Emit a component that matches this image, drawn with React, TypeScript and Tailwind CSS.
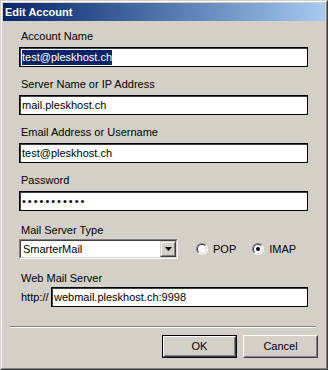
import React from "react";

const font = { fontFamily: '"Liberation Sans", Arial, sans-serif' };

function Field({ children, width = "w-[289px]" }: { children: React.ReactNode; width?: string }) {
  return (
    <div
      className={`${width} h-[20px] bg-white border border-black shadow-[inset_1px_1px_0_#404040] flex items-center pl-[2px] text-[11px] leading-[13px] text-black`}
    >
      {children}
    </div>
  );
}

function Label({ children }: { children: React.ReactNode }) {
  return <div className="ml-[2px] h-[13px] text-[11px] leading-[13px] text-black">{children}</div>;
}

function Radio({ checked, label }: { checked?: boolean; label: string }) {
  return (
    <div className="flex items-center">
      <div className="w-[12px] h-[12px] rounded-full bg-white border border-t-[#808080] border-l-[#808080] border-r-white border-b-white flex items-center justify-center">
        <div className="w-[10px] h-[10px] rounded-full border border-t-[#404040] border-l-[#404040] border-r-[#D4D0C8] border-b-[#D4D0C8] flex items-center justify-center">
          {checked && <div className="w-[4px] h-[4px] rounded-full bg-black" />}
        </div>
      </div>
      <span className="ml-[5px] text-[11px] leading-[13px] text-black">{label}</span>
    </div>
  );
}

function Button({ children, isDefault }: { children: React.ReactNode; isDefault?: boolean }) {
  return (
    <div className={`w-[75px] h-[23px] ${isDefault ? "border border-black" : ""}`}>
      <div className="w-full h-full border border-t-white border-l-white border-r-[#404040] border-b-[#404040]">
        <div className="w-full h-full border border-t-[#D4D0C8] border-l-[#D4D0C8] border-r-[#808080] border-b-[#808080] bg-[#D4D0C8] flex items-center justify-center text-[11px] leading-[13px] text-black">
          {children}
        </div>
      </div>
    </div>
  );
}

export default function App() {
  return (
    <div style={font} className="w-[328px] h-[370px] bg-[#D4D0C8] select-none">
      <div className="w-full h-full border border-t-[#D4D0C8] border-l-[#D4D0C8] border-r-[#404040] border-b-[#404040]">
        <div className="w-full h-full border border-t-white border-l-white border-r-[#808080] border-b-[#808080] p-[1px] flex flex-col">
          {/* title bar */}
          <div className="h-[18px] bg-gradient-to-r from-[#0A246A] to-[#A6CAF0] flex items-center pl-[2px] pt-[1px]">
            <span className="text-white font-bold text-[11px] leading-[13px]">Edit Account</span>
          </div>

          <div className="flex flex-col pl-[16px]">
            <div className="mt-[9px]">
              <Label>Account Name</Label>
            </div>
            <div className="mt-[4px]">
              <Field>
                <span className="bg-[#0A246A] text-white leading-[15px]">test@pleskhost.ch</span>
              </Field>
            </div>

            <div className="mt-[11px]">
              <Label>Server Name or IP Address</Label>
            </div>
            <div className="mt-[4px]">
              <Field>mail.pleskhost.ch</Field>
            </div>

            <div className="mt-[11px]">
              <Label>Email Address or Username</Label>
            </div>
            <div className="mt-[4px]">
              <Field>test@pleskhost.ch</Field>
            </div>

            <div className="mt-[11px]">
              <Label>Password</Label>
            </div>
            <div className="mt-[4px]">
              <Field>
                <span className="tracking-[2px]">•••••••••••</span>
              </Field>
            </div>

            <div className="mt-[13px]">
              <Label>Mail Server Type</Label>
            </div>
            <div className="mt-[2px] flex items-center">
              <div className="w-[159px] h-[20px] bg-white border border-t-[#808080] border-l-[#808080] border-r-white border-b-white">
                <div className="w-full h-full border border-t-[#404040] border-l-[#404040] border-r-[#D4D0C8] border-b-[#D4D0C8] flex items-center">
                  <span className="flex-1 pl-[2px] text-[11px] leading-[13px] text-black">SmarterMail</span>
                  <div className="w-[16px] h-full border border-t-[#D4D0C8] border-l-[#D4D0C8] border-r-[#404040] border-b-[#404040]">
                    <div className="w-full h-full bg-[#D4D0C8] border border-t-white border-l-white border-r-[#808080] border-b-[#808080] flex items-center justify-center">
                      <svg width="7" height="4" viewBox="0 0 7 4">
                        <path d="M0 0h7L3.5 4z" fill="#000" />
                      </svg>
                    </div>
                  </div>
                </div>
              </div>
              <div className="ml-[18px]">
                <Radio label="POP" />
              </div>
              <div className="ml-[16px]">
                <Radio checked label="IMAP" />
              </div>
            </div>

            <div className="mt-[13px]">
              <Label>Web Mail Server</Label>
            </div>
            <div className="mt-[2px] flex items-center">
              <span className="ml-[2px] w-[30px] text-[11px] leading-[13px] text-black">http://</span>
              <Field width="w-[257px]">webmail.pleskhost.ch:9998</Field>
            </div>
          </div>

          <div className="mt-[19px] ml-[7px] w-[306px] border-t border-t-[#808080] border-b border-b-white" />

          <div className="mt-[7px] flex justify-end gap-[6px] pr-[7px]">
            <Button isDefault>OK</Button>
            <Button>Cancel</Button>
          </div>
        </div>
      </div>
    </div>
  );
}
